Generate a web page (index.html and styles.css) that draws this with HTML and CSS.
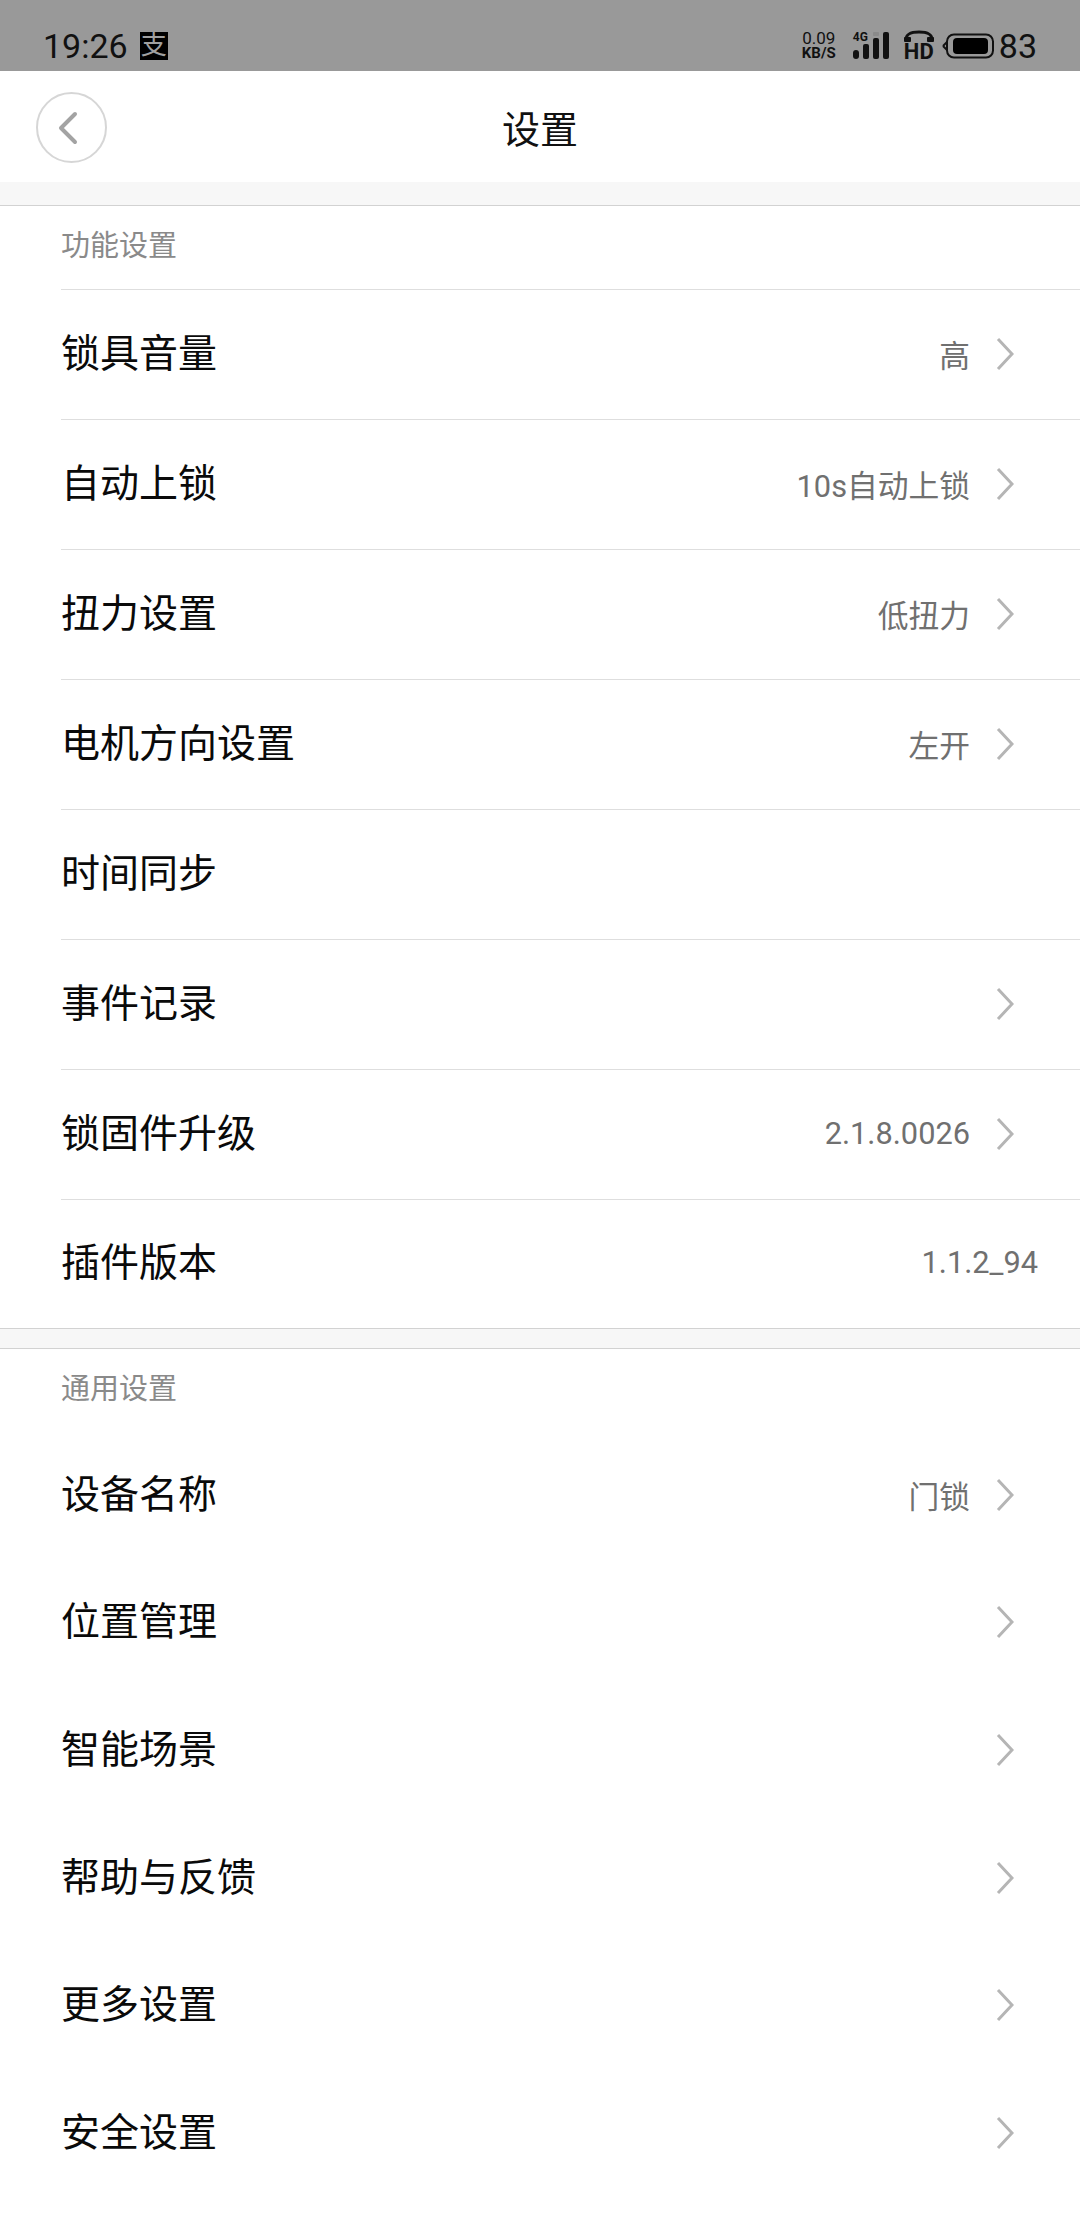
FILE: index.html
```html
<!DOCTYPE html>
<html lang="zh-CN">
<head>
  <meta charset="UTF-8">
  <title>设置</title>
  <link rel="stylesheet" href="styles.css">
</head>
<body>

  <div class="status-bar">
    <div class="status-left">
      <span class="clock">19:26</span>
      <span class="alipay">支</span>
    </div>
    <div class="status-right">
      <div class="speed"><span>0.09</span><b>KB/S</b></div>
      <div class="signal">
        <span class="net">4G</span>
        <svg width="38" height="28" viewBox="0 0 38 28">
          <rect x="1" y="18" width="6" height="9" rx="3" fill="#111"/>
          <rect x="11" y="12" width="6" height="15" rx="2" fill="#111"/>
          <rect x="21" y="6" width="6" height="21" rx="2" fill="#111"/>
          <rect x="21" y="0" width="6" height="4" rx="1" fill="#8a8a8a"/>
          <rect x="31" y="0" width="6" height="27" rx="2" fill="#111"/>
        </svg>
      </div>
      <div class="hd">
        <svg width="30" height="12" viewBox="0 0 30 12">
          <path d="M2 10 C2 3 8 2 15 2 C22 2 28 3 28 10" fill="none" stroke="#111" stroke-width="3"/>
          <rect x="0" y="7" width="7" height="5" rx="1" fill="#111"/>
          <rect x="23" y="7" width="7" height="5" rx="1" fill="#111"/>
        </svg>
        <b>HD</b>
      </div>
      <svg class="battery" width="52" height="26" viewBox="0 0 52 26">
        <path d="M1 13 L5 9" stroke="#111" stroke-width="2"/>
        <path d="M1 13 L5 17" stroke="#111" stroke-width="2"/>
        <rect x="5" y="1.5" width="46" height="23" rx="7" fill="none" stroke="#111" stroke-width="2"/>
        <rect x="11" y="5" width="35" height="16" rx="4" fill="#000"/>
      </svg>
      <span class="level">83</span>
    </div>
  </div>

  <div class="nav">
    <button class="back">
      <svg width="20" height="34" viewBox="0 0 20 34">
        <path d="M17 3 L3 17 L17 31" fill="none" stroke="#a3a3a3" stroke-width="4" stroke-linecap="round" stroke-linejoin="round"/>
      </svg>
    </button>
    <h1>设置</h1>
  </div>

  <div class="gap"></div>

  <div class="section">
    <div class="section-title">功能设置</div>
    <div class="row"><span class="name">锁具音量</span><span class="value">高</span><svg class="arrow" viewBox="0 0 18 34"><path d="M2 2 L16 17 L2 32"/></svg></div>
    <div class="row"><span class="name">自动上锁</span><span class="value">10s自动上锁</span><svg class="arrow" viewBox="0 0 18 34"><path d="M2 2 L16 17 L2 32"/></svg></div>
    <div class="row"><span class="name">扭力设置</span><span class="value">低扭力</span><svg class="arrow" viewBox="0 0 18 34"><path d="M2 2 L16 17 L2 32"/></svg></div>
    <div class="row"><span class="name">电机方向设置</span><span class="value">左开</span><svg class="arrow" viewBox="0 0 18 34"><path d="M2 2 L16 17 L2 32"/></svg></div>
    <div class="row"><span class="name">时间同步</span></div>
    <div class="row"><span class="name">事件记录</span><svg class="arrow" viewBox="0 0 18 34"><path d="M2 2 L16 17 L2 32"/></svg></div>
    <div class="row"><span class="name">锁固件升级</span><span class="value">2.1.8.0026</span><svg class="arrow" viewBox="0 0 18 34"><path d="M2 2 L16 17 L2 32"/></svg></div>
    <div class="row last"><span class="name">插件版本</span><span class="value">1.1.2_94</span></div>
  </div>

  <div class="gap small"></div>

  <div class="section plain">
    <div class="section-title">通用设置</div>
    <div class="row"><span class="name">设备名称</span><span class="value">门锁</span><svg class="arrow" viewBox="0 0 18 34"><path d="M2 2 L16 17 L2 32"/></svg></div>
    <div class="row"><span class="name">位置管理</span><svg class="arrow" viewBox="0 0 18 34"><path d="M2 2 L16 17 L2 32"/></svg></div>
    <div class="row"><span class="name">智能场景</span><svg class="arrow" viewBox="0 0 18 34"><path d="M2 2 L16 17 L2 32"/></svg></div>
    <div class="row"><span class="name">帮助与反馈</span><svg class="arrow" viewBox="0 0 18 34"><path d="M2 2 L16 17 L2 32"/></svg></div>
    <div class="row"><span class="name">更多设置</span><svg class="arrow" viewBox="0 0 18 34"><path d="M2 2 L16 17 L2 32"/></svg></div>
    <div class="row"><span class="name">安全设置</span><svg class="arrow" viewBox="0 0 18 34"><path d="M2 2 L16 17 L2 32"/></svg></div>
  </div>

</body>
</html>
```

FILE: styles.css
```css
* {
  box-sizing: border-box;
}

html, body {
  height: 2232px;
  overflow: hidden;
}

body {
  margin: 0;
  background: #fff;
  font-family: Roboto, "Noto Sans CJK SC", sans-serif;
  color: #000;
}

.status-bar {
  height: 71px;
  background: #999;
  display: flex;
  justify-content: space-between;
  align-items: flex-end;
  padding: 0 43px 6px 43px;
  color: #111;
}

.status-left,
.status-right {
  display: flex;
  align-items: center;
}

.clock {
  font-size: 34px;
  line-height: 38px;
}

.alipay {
  width: 28px;
  height: 28px;
  margin-left: 12px;
  background: #000;
  color: #a0a0a0;
  font-size: 26px;
  line-height: 27px;
  text-align: center;
}

.speed {
  display: flex;
  flex-direction: column;
  align-items: center;
  font-size: 17px;
  line-height: 15px;
  width: 36px;
}

.speed b {
  font-size: 15px;
}

.signal {
  display: flex;
  position: relative;
  align-items: flex-end;
  margin-left: 15px;
}

.net {
  position: absolute;
  left: 1px;
  top: -2px;
  font-size: 12px;
  font-weight: 700;
}

.hd {
  display: flex;
  flex-direction: column;
  align-items: center;
  margin-left: 14px;
  line-height: 18px;
}

.hd b {
  font-size: 22px;
  line-height: 20px;
}

.battery {
  margin-left: 8px;
}

.level {
  margin-left: 5px;
  font-size: 34px;
  line-height: 38px;
}

.nav {
  height: 111px;
  display: flex;
  align-items: center;
  justify-content: center;
  position: relative;
}

.nav h1 {
  margin: 0;
  font-size: 38px;
  font-weight: 400;
  color: #111;
}

.back {
  position: absolute;
  left: 36px;
  top: 21px;
  width: 71px;
  height: 71px;
  padding: 0 7px 0 0;
  border: 2px solid #d6d6d6;
  border-radius: 50%;
  background: #fff;
  display: flex;
  align-items: center;
  justify-content: center;
}

.gap {
  height: 24px;
  background: #f7f7f7;
  border-bottom: 1px solid #d2d2d2;
}

.gap.small {
  height: 21px;
  border-top: 1px solid #d2d2d2;
}

.section-title {
  height: 83px;
  padding: 20px 0 0 61px;
  font-size: 29px;
  line-height: 40px;
  font-weight: 400;
  color: #8a8a8a;
}

.row {
  height: 130px;
  margin-left: 61px;
  padding-right: 42px;
  border-top: 1px solid #dedede;
  display: flex;
  align-items: center;
}

.row.last {
  height: 129px;
}

.name {
  flex: 1;
  padding-bottom: 10px;
  font-size: 39px;
  font-weight: 400;
  color: #0a0a0a;
}

.value {
  padding-bottom: 3px;
  font-size: 30.75px;
  font-weight: 400;
  color: #707070;
}

.arrow {
  width: 18px;
  height: 34px;
  margin: 0 24px 2px 26px;
}

.arrow path {
  fill: none;
  stroke: #b5b5b5;
  stroke-width: 3;
}

.plain .section-title {
  height: 83px;
}

.plain .row {
  height: 127.6px;
  border-top: none;
}
```
